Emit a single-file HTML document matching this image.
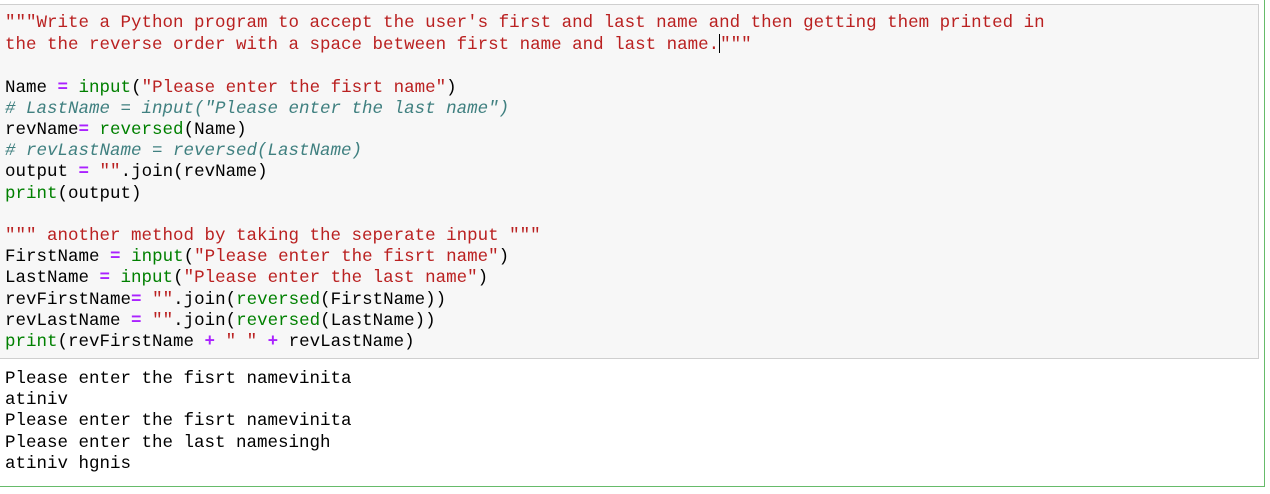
<!DOCTYPE html>
<html><head><style>
html,body{margin:0;padding:0;background:#fff;width:1270px;height:494px;overflow:hidden}
.cell{position:absolute;left:-1px;top:-2px;width:1266px;height:489px;border:1px solid #66bb6a;box-sizing:border-box}
.inp{position:absolute;left:0;top:4px;width:1259px;height:355px;background:#f7f7f7;border:1px solid #cfcfcf;box-sizing:border-box;border-left:none}
pre{margin:0;font-family:"Liberation Mono",monospace;font-size:17.5px;line-height:21.2px;color:#000;position:absolute;left:5px;white-space:pre}
.s{color:#ba2121}.b{color:#008000}.o{color:#aa22ff;font-weight:bold}.c{color:#408080;font-style:italic}
.cur{display:inline-block;width:1px;height:19px;background:#000;vertical-align:-4px}
</style></head><body>
<div class="cell"></div>
<div class="inp"></div>
<pre style="top:13px"><span class="s">"""Write a Python program to accept the user's first and last name and then getting them printed in
the the reverse order with a space between first name and last name.<span class="cur"></span>"""</span>

Name <span class="o">=</span> <span class="b">input</span>(<span class="s">"Please enter the fisrt name"</span>)
<span class="c"># LastName = input("Please enter the last name")</span>
revName<span class="o">=</span> <span class="b">reversed</span>(Name)
<span class="c"># revLastName = reversed(LastName)</span>
output <span class="o">=</span> <span class="s">""</span>.join(revName)
<span class="b">print</span>(output)

<span class="s">""" another method by taking the seperate input """</span>
FirstName <span class="o">=</span> <span class="b">input</span>(<span class="s">"Please enter the fisrt name"</span>)
LastName <span class="o">=</span> <span class="b">input</span>(<span class="s">"Please enter the last name"</span>)
revFirstName<span class="o">=</span> <span class="s">""</span>.join(<span class="b">reversed</span>(FirstName))
revLastName <span class="o">=</span> <span class="s">""</span>.join(<span class="b">reversed</span>(LastName))
<span class="b">print</span>(revFirstName <span class="o">+</span> <span class="s">" "</span> <span class="o">+</span> revLastName)</pre>
<pre style="top:369px">Please enter the fisrt namevinita
atiniv
Please enter the fisrt namevinita
Please enter the last namesingh
atiniv hgnis</pre>
</body></html>
